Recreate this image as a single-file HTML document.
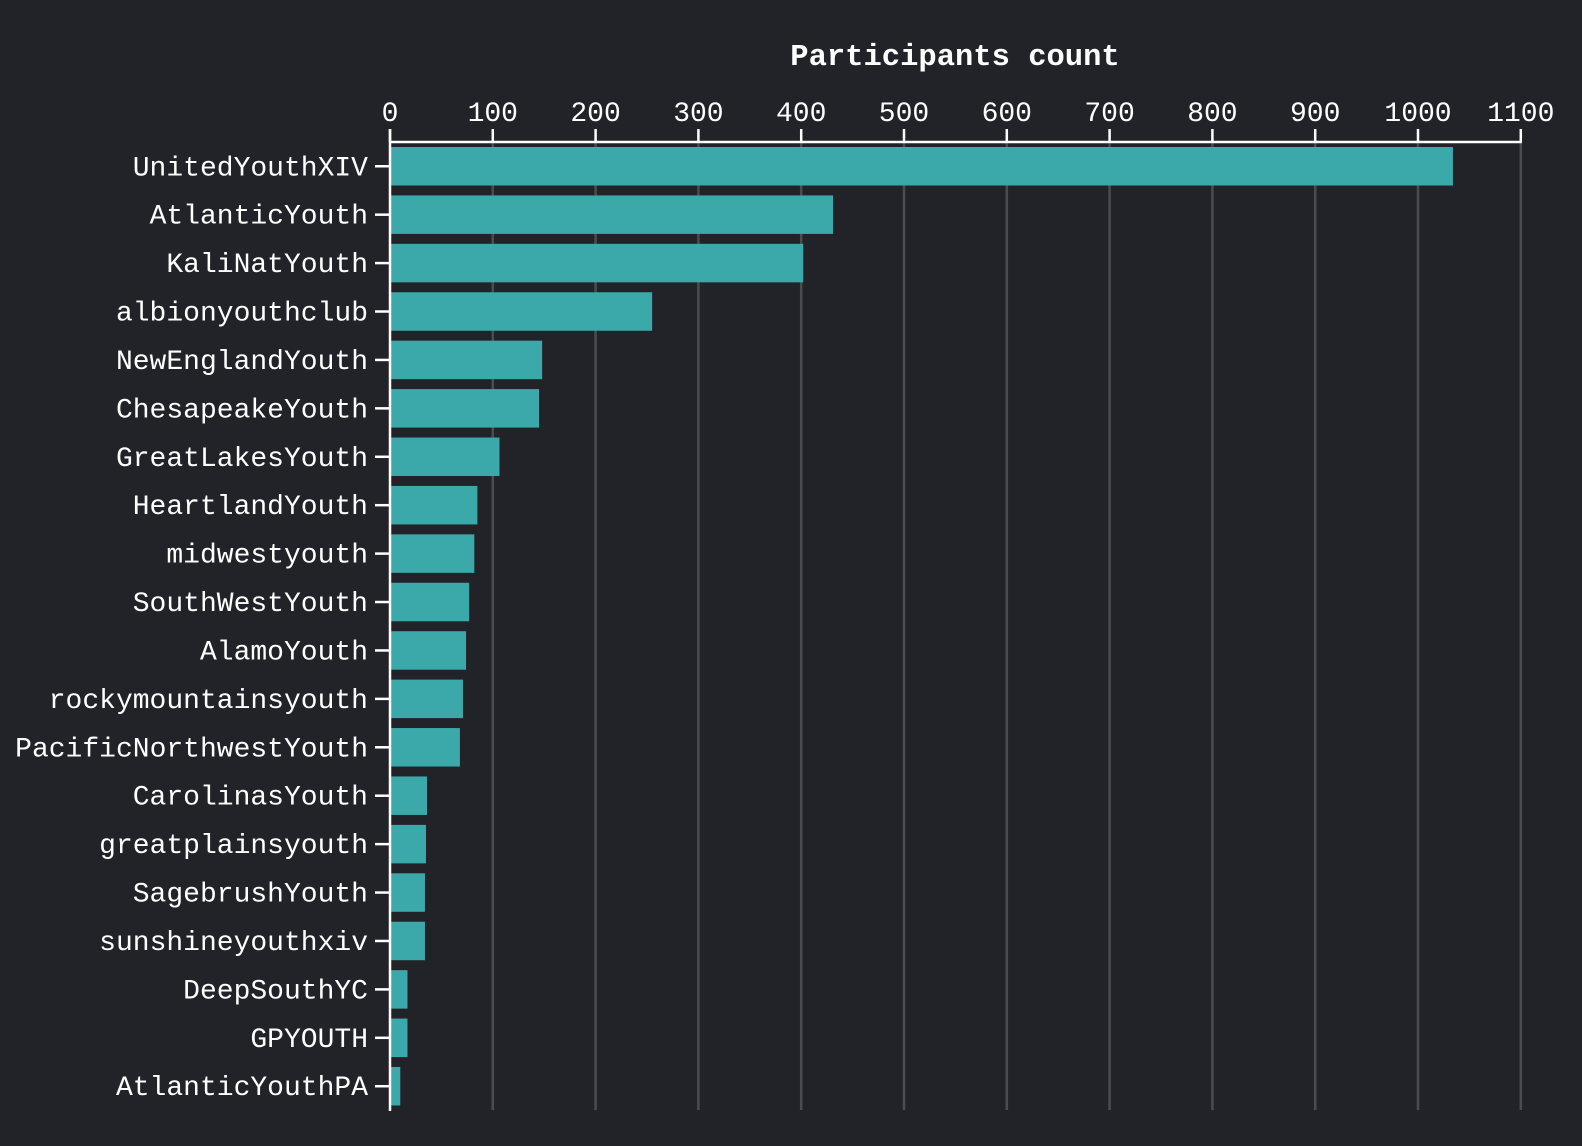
<!DOCTYPE html>
<html><head><meta charset="utf-8"><style>
html,body{margin:0;padding:0;background:#222328;}
svg{display:block}
text{font-family:"Liberation Mono","DejaVu Sans Mono",monospace;fill:#ffffff;font-size:28px}
</style></head><body>
<svg width="1582" height="1146" viewBox="0 0 1582 1146" xmlns="http://www.w3.org/2000/svg">
<rect width="1582" height="1146" fill="#222328"/>
<text x="955" y="65" text-anchor="middle" font-weight="bold" style="font-size:30.5px">Participants count</text>
<g id="grid" stroke="#4b4c50" stroke-width="2.5"></g>
<g id="bars" fill="#3ba8a9"></g>
<g id="axis" stroke="#fff" stroke-width="2.5"></g>
<g id="labels"></g>
</svg>
<script>
var ns="http://www.w3.org/2000/svg";
function el(t,a,p,txt){var e=document.createElementNS(ns,t);for(var k in a)e.setAttribute(k,a[k]);if(txt!=null)e.textContent=txt;document.getElementById(p).appendChild(e);}
var x0=390,s=1.028;
var data=[["UnitedYouthXIV",1034],["AtlanticYouth",431],["KaliNatYouth",402],["albionyouthclub",255],["NewEnglandYouth",148],["ChesapeakeYouth",145],["GreatLakesYouth",106.5],["HeartlandYouth",85],["midwestyouth",82],["SouthWestYouth",77],["AlamoYouth",74],["rockymountainsyouth",71],["PacificNorthwestYouth",68],["CarolinasYouth",36],["greatplainsyouth",35],["SagebrushYouth",34],["sunshineyouthxiv",34],["DeepSouthYC",17],["GPYOUTH",17],["AtlanticYouthPA",10]];
for(var i=1;i<=11;i++){var x=x0+i*100*s;el("line",{x1:x,x2:x,y1:142,y2:1110},"grid");}
data.forEach(function(d,i){var y=147+i*48.42;el("rect",{x:x0,y:y,width:d[1]*s,height:38.5},"bars");
var c=y+19.25;el("line",{x1:375,x2:389,y1:c,y2:c},"axis");
el("text",{x:368,y:c+9,"text-anchor":"end"},"labels",d[0]);});
el("line",{x1:x0,x2:x0+1100*s+1,y1:142,y2:142},"axis");
el("line",{x1:x0,x2:x0,y1:129,y2:1111},"axis");
for(var i=0;i<=11;i++){var x=x0+i*100*s;el("line",{x1:x,x2:x,y1:129,y2:142},"axis");
el("text",{x:x,y:121,"text-anchor":"middle"},"labels",String(i*100));}
</script>
</body></html>
